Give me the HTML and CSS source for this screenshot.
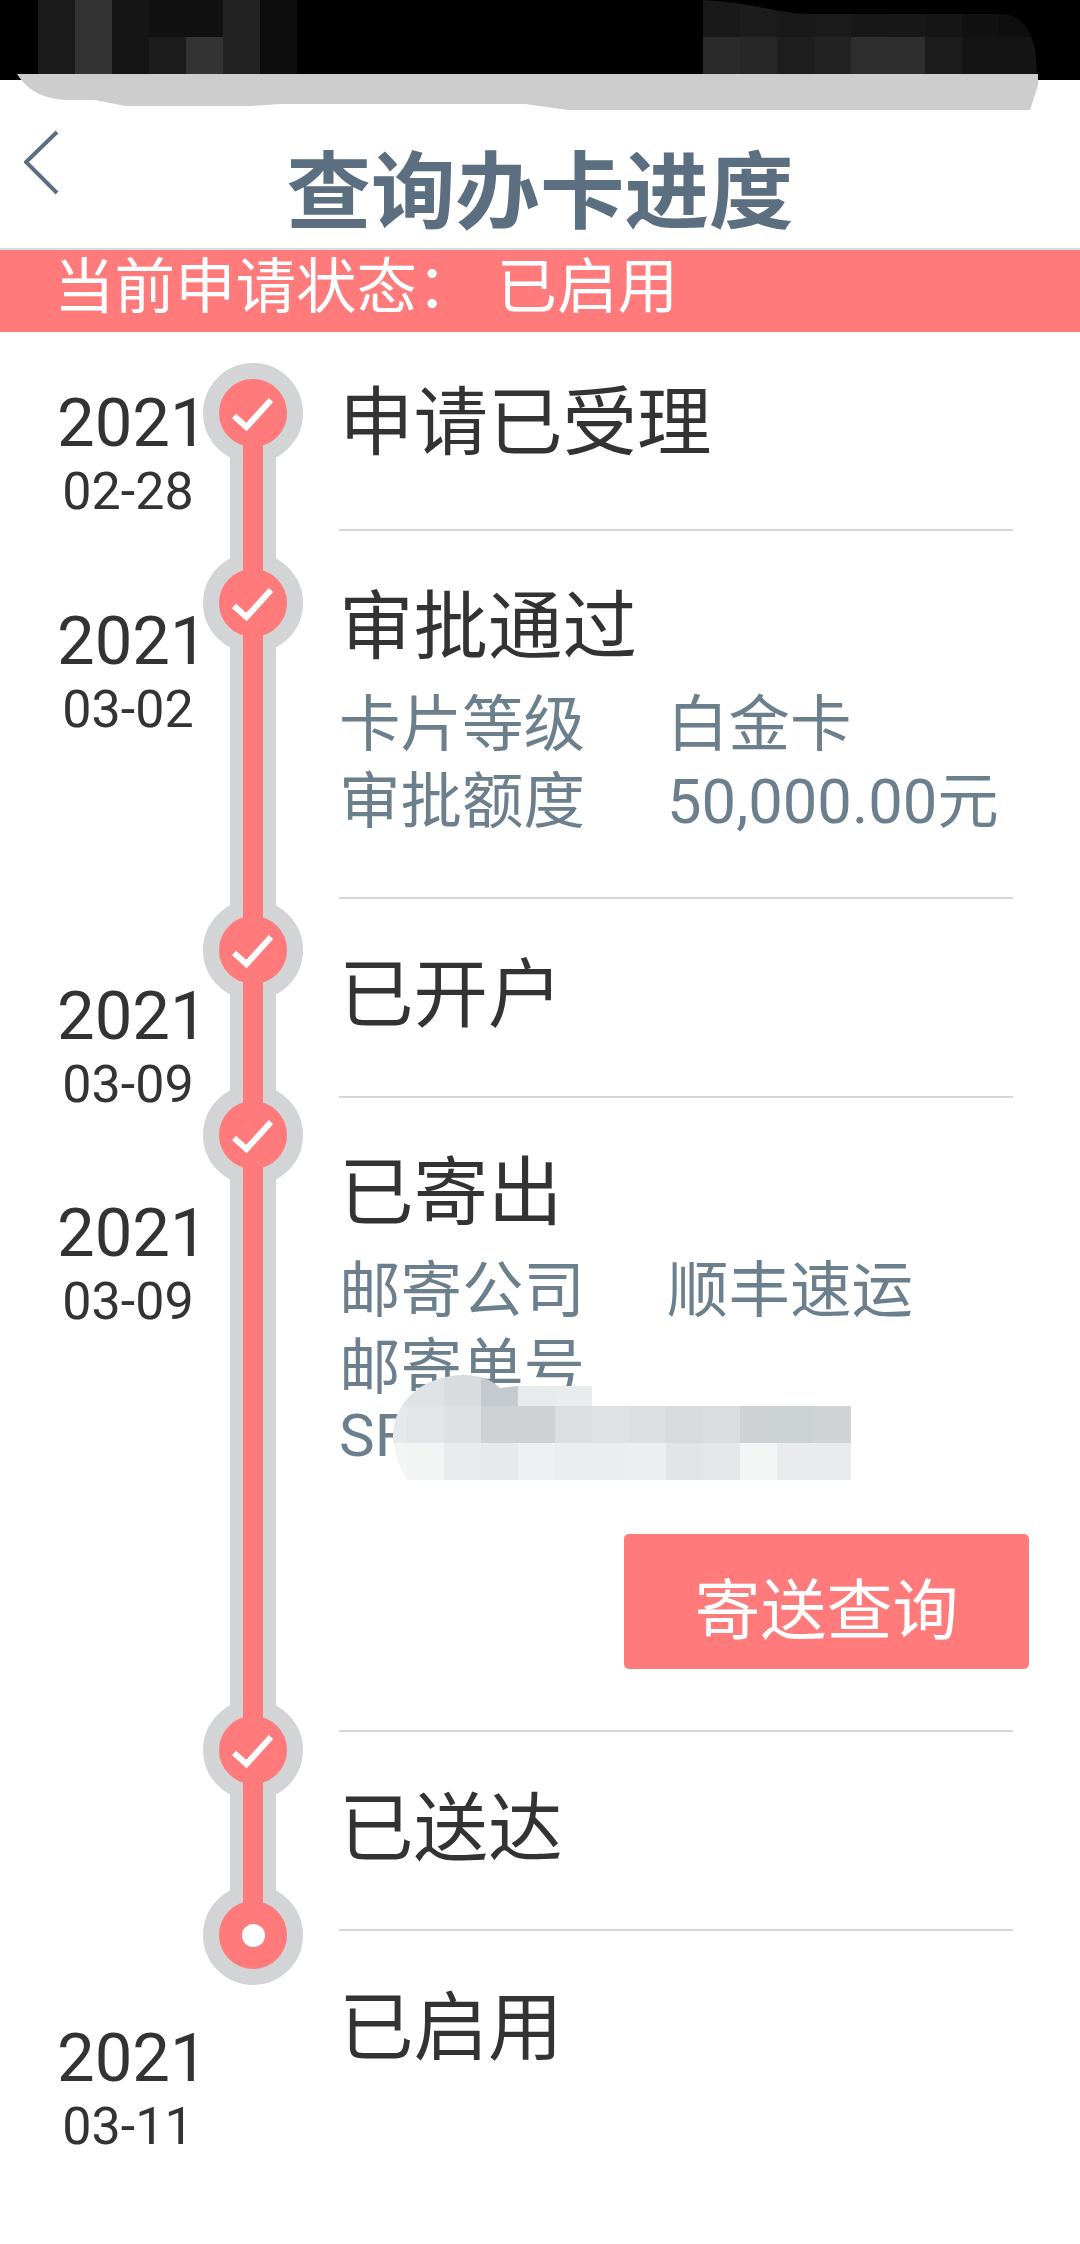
FILE: index.html
```html
<!DOCTYPE html>
<html lang="zh-CN">
<head>
    <meta charset="UTF-8">
    <meta name="viewport" content="width=device-width, initial-scale=1.0">
    <title>查询办卡进度</title>
    <link rel="stylesheet" href="styles.css">
</head>
<body>
    <div class="statusbar"></div>

    <!-- mosaic and grey smear over the phone status bar -->
    <svg class="redact-top" width="1080" height="112" viewBox="0 0 1080 112">
        <defs>
            <clipPath id="topRightClip">
                <path d="M703 0 C750 2 780 14 810 14 L1000 14 C1025 14 1037 35 1037 74 L703 74 Z"/>
            </clipPath>
        </defs>
        <path fill="#cdcdcd" d="M17 74 L1038 74 L1038 85 L1030 110 L568 110 L525 104 L280 104 L250 106 L125 106 L95 100 L65 100 C40 98 28 90 17 74 Z"/>
        <g>
            <rect x="38" y="0" width="37" height="74" fill="#1a1a1a"/>
            <rect x="75" y="0" width="37" height="74" fill="#333333"/>
            <rect x="112" y="0" width="37" height="74" fill="#151515"/>
            <rect x="149" y="0" width="37" height="37" fill="#111111"/>
            <rect x="149" y="37" width="37" height="37" fill="#1c1c1c"/>
            <rect x="186" y="0" width="37" height="37" fill="#111111"/>
            <rect x="186" y="37" width="37" height="37" fill="#333333"/>
            <rect x="223" y="0" width="37" height="74" fill="#222222"/>
            <rect x="260" y="0" width="37" height="74" fill="#0c0c0c"/>
        </g>
        <g clip-path="url(#topRightClip)">
            <rect x="703" y="0" width="37" height="37" fill="#191919"/>
            <rect x="740" y="0" width="37" height="37" fill="#1c1c1c"/>
            <rect x="777" y="0" width="37" height="37" fill="#191919"/>
            <rect x="814" y="0" width="37" height="37" fill="#1a1a1a"/>
            <rect x="851" y="0" width="37" height="37" fill="#171717"/>
            <rect x="888" y="0" width="37" height="37" fill="#181818"/>
            <rect x="925" y="0" width="37" height="37" fill="#161616"/>
            <rect x="962" y="0" width="37" height="37" fill="#111111"/>
            <rect x="999" y="0" width="38" height="37" fill="#0e0e0e"/>
            <rect x="703" y="37" width="37" height="37" fill="#2a2a2a"/>
            <rect x="740" y="37" width="37" height="37" fill="#272727"/>
            <rect x="777" y="37" width="37" height="37" fill="#1e1e1e"/>
            <rect x="814" y="37" width="37" height="37" fill="#222222"/>
            <rect x="851" y="37" width="37" height="37" fill="#2e2e2e"/>
            <rect x="888" y="37" width="37" height="37" fill="#2e2e2e"/>
            <rect x="925" y="37" width="37" height="37" fill="#1c1c1c"/>
            <rect x="962" y="37" width="37" height="37" fill="#141414"/>
            <rect x="999" y="37" width="38" height="37" fill="#141414"/>
        </g>
    </svg>

    <header class="page-header">
        <svg class="back-icon" width="36" height="68" viewBox="0 0 36 68">
            <path d="M33 2 L2 32 L33 63" fill="none" stroke="#5b6f80" stroke-width="4"/>
        </svg>
        <h1>查询办卡进度</h1>
    </header>

    <div class="status-strip">当前申请状态：<span class="status-value">已启用</span></div>

    <div class="timeline">
        <div class="rail"></div>

        <div class="step step-accepted">
            <div class="step-date">
                <div class="year">2021</div>
                <div class="day">02-28</div>
            </div>
            <div class="node">
                <svg width="68" height="68" viewBox="-34 -34 68 68"><path class="tick" d="M-19 3 L-6.5 14 L18 -13"/></svg>
            </div>
            <div class="step-body">
                <div class="step-title">申请已受理</div>
            </div>
        </div>

        <div class="step step-approved">
            <div class="step-date">
                <div class="year">2021</div>
                <div class="day">03-02</div>
            </div>
            <div class="node">
                <svg width="68" height="68" viewBox="-34 -34 68 68"><path class="tick" d="M-19 3 L-6.5 14 L18 -13"/></svg>
            </div>
            <div class="step-body">
                <div class="step-title">审批通过</div>
                <div class="detail">
                    <span>卡片等级</span>
                    <span>白金卡</span>
                </div>
                <div class="detail">
                    <span>审批额度</span>
                    <span>50,000.00元</span>
                </div>
            </div>
        </div>

        <div class="step step-opened">
            <div class="step-date">
                <div class="year">2021</div>
                <div class="day">03-09</div>
            </div>
            <div class="node">
                <svg width="68" height="68" viewBox="-34 -34 68 68"><path class="tick" d="M-19 3 L-6.5 14 L18 -13"/></svg>
            </div>
            <div class="step-body">
                <div class="step-title">已开户</div>
            </div>
        </div>

        <div class="step step-posted">
            <div class="step-date">
                <div class="year">2021</div>
                <div class="day">03-09</div>
            </div>
            <div class="node">
                <svg width="68" height="68" viewBox="-34 -34 68 68"><path class="tick" d="M-19 3 L-6.5 14 L18 -13"/></svg>
            </div>
            <div class="step-body">
                <div class="step-title">已寄出</div>
                <div class="detail">
                    <span>邮寄公司</span>
                    <span>顺丰速运</span>
                </div>
                <div class="detail">
                    <span>邮寄单号</span>
                </div>
                <div class="tracking">SF</div>
                <button class="track-btn" type="button">寄送查询</button>

                <!-- mosaic over the tracking number -->
                <svg class="redact-tracking" width="500" height="116" viewBox="0 0 500 116">
                    <defs>
                        <clipPath id="trackingClip">
                            <path d="M23 67 C23 30 55 5 94 5 C110 5 122 10 130 18 L148 16 L222 16 L222 36 L481 36 L481 110 L37 110 C28 95 23 80 23 67 Z"/>
                        </clipPath>
                    </defs>
                    <g clip-path="url(#trackingClip)">
                        <rect x="0" y="0" width="37" height="36" fill="#e1e4e6"/>
                        <rect x="37" y="0" width="37" height="36" fill="#dfe2e4"/>
                        <rect x="74" y="0" width="37" height="36" fill="#d8dcde"/>
                        <rect x="111" y="0" width="37" height="36" fill="#c4cace"/>
                        <rect x="148" y="0" width="37" height="36" fill="#e8ebec"/>
                        <rect x="185" y="0" width="37" height="36" fill="#e9ecec"/>

                        <rect x="0" y="36" width="37" height="37" fill="#e6e9ea"/>
                        <rect x="37" y="36" width="37" height="37" fill="#e3e6e8"/>
                        <rect x="74" y="36" width="37" height="37" fill="#dee1e3"/>
                        <rect x="111" y="36" width="37" height="37" fill="#ced2d5"/>
                        <rect x="148" y="36" width="37" height="37" fill="#cdd1d4"/>
                        <rect x="185" y="36" width="37" height="37" fill="#dcdfe1"/>
                        <rect x="222" y="36" width="37" height="37" fill="#dfe2e4"/>
                        <rect x="259" y="36" width="37" height="37" fill="#dcdfe1"/>
                        <rect x="296" y="36" width="37" height="37" fill="#d7dbde"/>
                        <rect x="333" y="36" width="37" height="37" fill="#dadddf"/>
                        <rect x="370" y="36" width="37" height="37" fill="#ced2d5"/>
                        <rect x="407" y="36" width="37" height="37" fill="#ccd1d4"/>
                        <rect x="444" y="36" width="37" height="37" fill="#d0d4d7"/>

                        <rect x="0" y="73" width="37" height="37" fill="#f4f5f5"/>
                        <rect x="37" y="73" width="37" height="37" fill="#f3f4f4"/>
                        <rect x="74" y="73" width="37" height="37" fill="#e8eaeb"/>
                        <rect x="111" y="73" width="37" height="37" fill="#e7e9ea"/>
                        <rect x="148" y="73" width="37" height="37" fill="#eef0f1"/>
                        <rect x="185" y="73" width="37" height="37" fill="#ecedee"/>
                        <rect x="222" y="73" width="37" height="37" fill="#ecedef"/>
                        <rect x="259" y="73" width="37" height="37" fill="#eceeef"/>
                        <rect x="296" y="73" width="37" height="37" fill="#e2e4e6"/>
                        <rect x="333" y="73" width="37" height="37" fill="#e5e7e9"/>
                        <rect x="370" y="73" width="37" height="37" fill="#f4f5f5"/>
                        <rect x="407" y="73" width="37" height="37" fill="#e9ebec"/>
                        <rect x="444" y="73" width="37" height="37" fill="#e9ebec"/>
                    </g>
                </svg>
            </div>
        </div>

        <div class="step step-delivered">
            <div class="step-date"></div>
            <div class="node">
                <svg width="68" height="68" viewBox="-34 -34 68 68"><path class="tick" d="M-19 3 L-6.5 14 L18 -13"/></svg>
            </div>
            <div class="step-body">
                <div class="step-title">已送达</div>
            </div>
        </div>

        <div class="step step-active">
            <div class="step-date">
                <div class="year">2021</div>
                <div class="day">03-11</div>
            </div>
            <div class="node">
                <span class="node-dot"></span>
            </div>
            <div class="step-body">
                <div class="step-title">已启用</div>
            </div>
        </div>
    </div>
</body>
</html>
```

FILE: styles.css
```css
* {
    margin: 0;
    padding: 0;
    box-sizing: border-box;
}

body {
    position: relative;
    background: #fff;
    color: #333;
    font-family: Roboto, "Noto Sans CJK SC", sans-serif;
}

.statusbar {
    height: 80px;
    background: #000;
}

.redact-top {
    position: absolute;
    top: 0;
    left: 0;
}

.page-header {
    display: grid;
    grid-template-columns: 1fr auto 1fr;
    height: 170px;
    padding-top: 50px;
    border-bottom: 2px solid #d5dde2;
}

.back-icon {
    display: block;
    margin-left: 24px;
}

h1 {
    padding-top: 5px;
    color: #5b6f80;
    font-family: "Noto Sans CJK SC", sans-serif;
    font-size: 84.5px;
    font-weight: 700;
    line-height: 100px;
}

.status-strip {
    height: 82px;
    padding-left: 54px;
    background: #ff7b7b;
    color: #fff;
    font-family: "Noto Sans CJK SC", sans-serif;
    font-size: 60.5px;
    line-height: 64px;
}

.status-value {
    margin-left: 19px;
}

.timeline {
    position: relative;
}

/* grey rail sits under the node rings, its red core runs over them */
.rail {
    position: absolute;
    top: 81px;
    left: 230px;
    width: 46px;
    height: 1522px;
    background: #d2d4d5;
}

.rail::before {
    content: "";
    position: absolute;
    z-index: 2;
    top: 0;
    left: 13px;
    width: 20px;
    height: 100%;
    background: #ff7b7b;
}

.step {
    display: grid;
    grid-template-columns: 203px 100px 1fr;
    grid-template-rows: 100%;
    height: var(--step-height);
}

.step-accepted {
    --step-height: 199px;
    --node-top: 31px;
    --date-top: 55px;
    --title-top: 40px;
}

.step-approved {
    --step-height: 368px;
    --node-top: 22px;
    --date-top: 74px;
    --title-top: 45px;
}

.step-opened {
    --step-height: 199px;
    --node-top: 1px;
    --date-top: 81px;
    --title-top: 45px;
}

.step-posted {
    --step-height: 634px;
    --node-top: -13px;
    --date-top: 99px;
    --title-top: 44px;
}

.step-delivered {
    --step-height: 199px;
    --node-top: -32px;
    --date-top: 0px;
    --title-top: 46px;
}

.step-active {
    --step-height: 313px;
    --node-top: -46px;
    --date-top: 91px;
    --title-top: 46px;
}

.step-date {
    margin-top: var(--date-top);
    padding-left: 53px;
    text-align: center;
}

.year {
    padding: 3px 0 0 4px;
    font-size: 67px;
    line-height: 67px;
}

.day {
    font-size: 52px;
    line-height: 70px;
}

.node {
    position: relative;
    display: flex;
    justify-content: center;
    align-items: center;
    width: 100px;
    height: 100px;
    margin-top: var(--node-top);
    background: #ff7b7b;
    border: 16px solid #d2d4d5;
    border-radius: 50%;
}

.node svg {
    position: relative;
    z-index: 3;
    display: block;
    flex: none;
}

.tick {
    fill: none;
    stroke: #fff;
    stroke-width: 6;
}

.node-dot {
    position: relative;
    z-index: 3;
    width: 23px;
    height: 23px;
    background: #fff;
    border-radius: 50%;
}

.step-body {
    position: relative;
    display: flex;
    flex-direction: column;
    margin: 0 67px 0 36px;
    padding-top: var(--title-top);
    border-bottom: 2px solid #d3d7d9;
}

.step-active .step-body {
    border-bottom: none;
}

.step-title {
    margin-bottom: 21px;
    font-family: "Noto Sans CJK SC", sans-serif;
    font-size: 74.5px;
    line-height: 90px;
}

.detail {
    display: grid;
    grid-template-columns: 328px 1fr;
    color: #6c7f8d;
    font-size: 61.5px;
    line-height: 77px;
    white-space: nowrap;
}

.tracking {
    color: #6c7f8d;
    font-size: 60px;
    line-height: 57px;
}

.track-btn {
    align-self: flex-end;
    width: 405px;
    height: 135px;
    margin: 70px -16px 0 0;
    padding-top: 6px;
    background: #ff7b7b;
    border: none;
    border-radius: 5px;
    color: #fff;
    font-family: "Noto Sans CJK SC", sans-serif;
    font-size: 66px;
}

.redact-tracking {
    position: absolute;
    top: 272px;
    left: 31px;
}
```
